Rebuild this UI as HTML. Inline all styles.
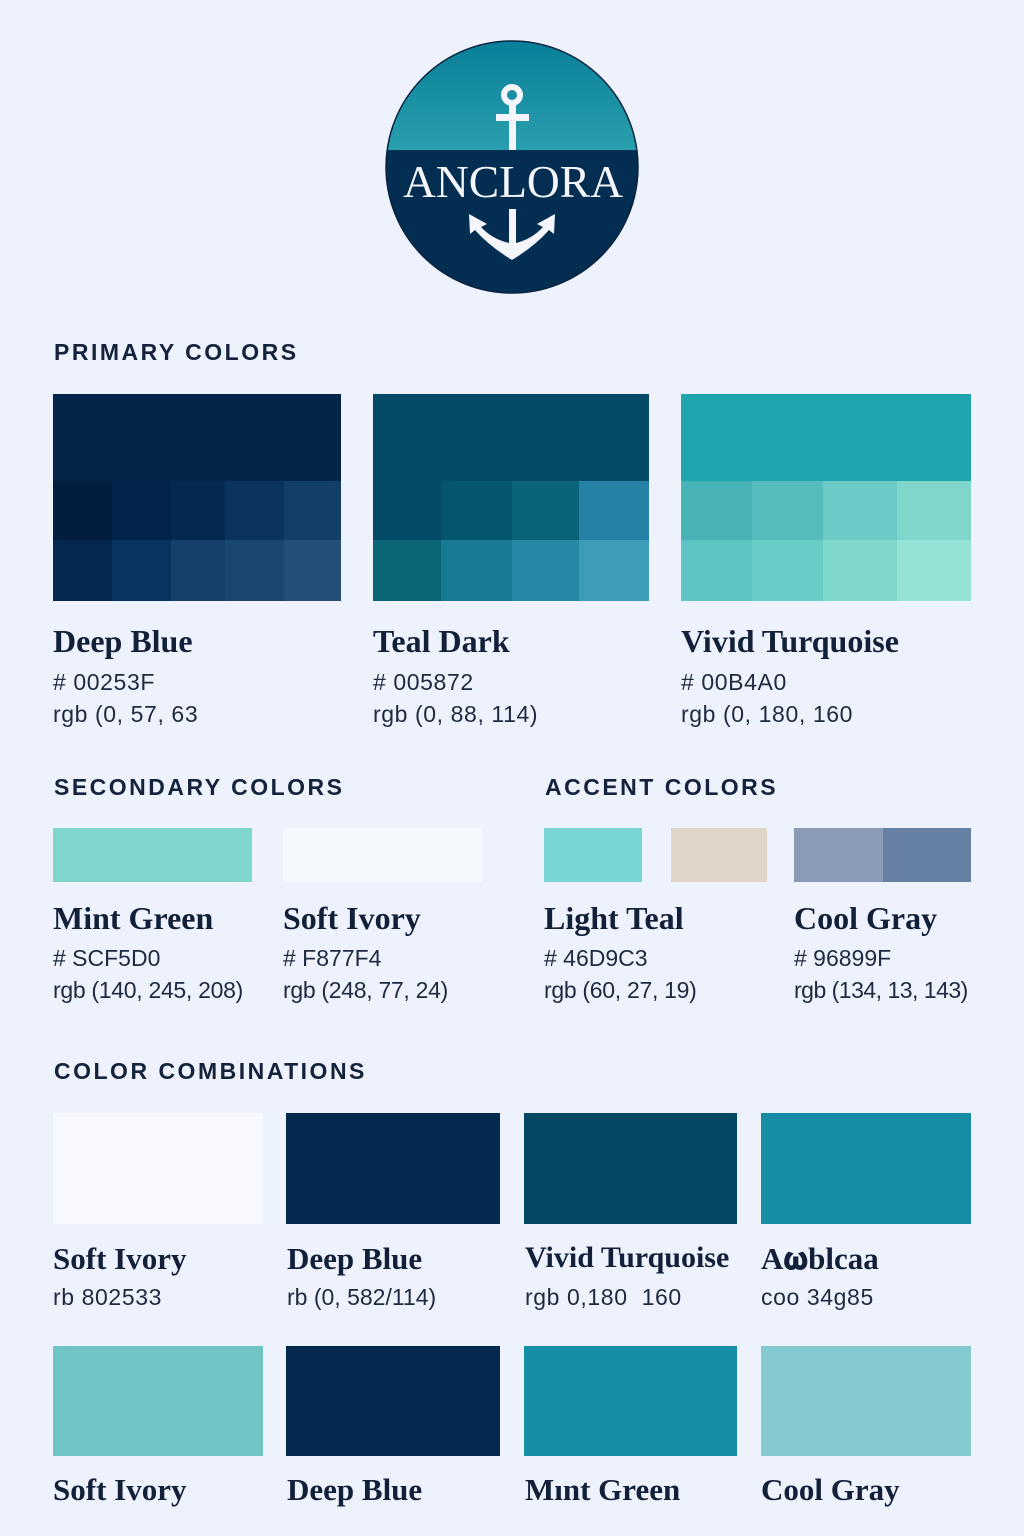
<!DOCTYPE html>
<html><head><meta charset="utf-8"><style>
body{margin:0;width:1024px;height:1536px;background:#eef2fc;position:relative;overflow:hidden;font-family:"Liberation Sans",sans-serif;color:#12203a}
.a{position:absolute}
.h{position:absolute;font-size:23px;font-weight:bold;letter-spacing:2.5px;color:#14223c;line-height:1}
.n{position:absolute;font-family:"Liberation Serif",serif;font-weight:bold;font-size:32px;line-height:1;color:#12203a;white-space:nowrap}
.t{position:absolute;font-size:23px;letter-spacing:0.6px;line-height:1;color:#1e2a40;white-space:nowrap}
.g{position:absolute;display:grid}
</style></head><body>

<svg class="a" style="left:380px;top:35px" width="264" height="264" viewBox="380 35 264 264">
<defs><linearGradient id="tg" x1="0" y1="0" x2="0" y2="1"><stop offset="0" stop-color="#077c97"/><stop offset="1" stop-color="#2aa0ae"/></linearGradient>
<clipPath id="c"><circle cx="512" cy="167" r="126"/></clipPath></defs>
<g clip-path="url(#c)">
<rect x="380" y="35" width="264" height="116" fill="url(#tg)"/>
<rect x="380" y="150" width="264" height="150" fill="#042d52"/>
</g>
<circle cx="512" cy="167" r="126" fill="none" stroke="#0a2440" stroke-width="1.5"/>
<circle cx="512" cy="95" r="8" fill="none" stroke="#f4f6fb" stroke-width="6"/>
<rect x="509" y="102" width="7" height="48" fill="#f4f6fb"/>
<rect x="496" y="114" width="33" height="7" fill="#f4f6fb"/>
<text x="513" y="197" text-anchor="middle" font-family="Liberation Serif,serif" font-size="46" textLength="220" lengthAdjust="spacingAndGlyphs" fill="#f4f6fb">ANCLORA</text>
<path d="M509 209 h7 v34 q16 -4 27 -16 l-6 -3 l18 -10 l-1 20 l-5 -4 q-14 16 -37 30 q-23 -14 -37 -30 l-5 4 l-1 -20 l18 10 l-6 3 q11 12 28 16z" fill="#f4f6fb"/>
</svg>

<div class="h" style="left:54px;top:341px">PRIMARY COLORS</div>

<div class="g" style="left:53px;top:394px;width:288px;height:207px;grid-template-columns:59px 59px 54px 59px 57px;grid-template-rows:87px 59px 61px">
<div style="grid-column:1/6;background:#03254a"></div>
<div style="background:#021d3d"></div><div style="background:#03234a"></div><div style="background:#042a52"></div><div style="background:#0a345c"></div><div style="background:#123f66"></div>
<div style="background:#04284f"></div><div style="background:#073460"></div><div style="background:#15406a"></div><div style="background:#1b466f"></div><div style="background:#244f77"></div>
</div>
<div class="g" style="left:373px;top:394px;width:276px;height:207px;grid-template-columns:68px 71px 67px 70px;grid-template-rows:87px 59px 61px">
<div style="grid-column:1/5;background:#034a66"></div>
<div style="background:#034a66"></div><div style="background:#03566e"></div><div style="background:#0b6378"></div><div style="background:#2681a6"></div>
<div style="background:#0b6577"></div><div style="background:#197a93"></div><div style="background:#268aa6"></div><div style="background:#3d9db9"></div>
</div>
<div class="g" style="left:681px;top:394px;width:290px;height:207px;grid-template-columns:71px 71px 74px 74px;grid-template-rows:87px 59px 61px">
<div style="grid-column:1/5;background:#1ea5b0"></div>
<div style="background:#48b3b6"></div><div style="background:#55bcbd"></div><div style="background:#6cc9c6"></div><div style="background:#80d6ca"></div>
<div style="background:#5dc3c3"></div><div style="background:#6accc6"></div><div style="background:#80d8cd"></div><div style="background:#95e2d6"></div>
</div>

<div class="n" style="left:53px;top:625px">Deep Blue</div>
<div class="t" style="left:53px;top:671px"># 00253F</div>
<div class="t" style="left:53px;top:703px">rgb (0, 57, 63</div>
<div class="n" style="left:373px;top:625px">Teal Dark</div>
<div class="t" style="left:373px;top:671px"># 005872</div>
<div class="t" style="left:373px;top:703px">rgb (0, 88, 114)</div>
<div class="n" style="left:681px;top:625px">Vivid Turquoise</div>
<div class="t" style="left:681px;top:671px"># 00B4A0</div>
<div class="t" style="left:681px;top:703px">rgb (0, 180, 160</div>

<div class="h" style="left:54px;top:776px">SECONDARY COLORS</div>
<div class="h" style="left:545px;top:776px">ACCENT COLORS</div>

<div class="a" style="left:53px;top:828px;width:199px;height:54px;background:#7fd6cc"></div>
<div class="a" style="left:283px;top:828px;width:199px;height:54px;background:#f5f8fd"></div>
<div class="a" style="left:544px;top:828px;width:98px;height:54px;background:#79d6d4"></div>
<div class="a" style="left:671px;top:828px;width:96px;height:54px;background:#dfd5c8"></div>
<div class="a" style="left:794px;top:828px;width:89px;height:54px;background:#8a9cb5"></div>
<div class="a" style="left:883px;top:828px;width:88px;height:54px;background:#6580a3"></div>

<div class="n" style="left:53px;top:902px">Mint Green</div>
<div class="t" style="left:53px;top:947px;letter-spacing:0"># SCF5D0</div>
<div class="t" style="left:53px;top:979px;letter-spacing:-0.3px">rgb (140, 245, 208)</div>
<div class="n" style="left:283px;top:902px">Soft Ivory</div>
<div class="t" style="left:283px;top:947px;letter-spacing:0"># F877F4</div>
<div class="t" style="left:283px;top:979px;letter-spacing:-0.3px">rgb (248, 77, 24)</div>
<div class="n" style="left:544px;top:902px">Light Teal</div>
<div class="t" style="left:544px;top:947px;letter-spacing:0"># 46D9C3</div>
<div class="t" style="left:544px;top:979px;letter-spacing:-0.3px">rgb (60, 27, 19)</div>
<div class="n" style="left:794px;top:902px">Cool Gray</div>
<div class="t" style="left:794px;top:947px;letter-spacing:0"># 96899F</div>
<div class="t" style="left:794px;top:979px;letter-spacing:-0.5px">rgb (134, 13, 143)</div>

<div class="h" style="left:54px;top:1060px">COLOR COMBINATIONS</div>

<div class="a" style="left:53px;top:1113px;width:210px;height:111px;background:#f7f9fe"></div>
<div class="a" style="left:286px;top:1113px;width:214px;height:111px;background:#022a4e"></div>
<div class="a" style="left:524px;top:1113px;width:213px;height:111px;background:#034863"></div>
<div class="a" style="left:761px;top:1113px;width:210px;height:111px;background:#168ca5"></div>

<div class="n" style="left:53px;top:1243px;font-size:31px">Soft Ivory</div>
<div class="t" style="left:53px;top:1286px">rb 802533</div>
<div class="n" style="left:287px;top:1243px;font-size:31px">Deep Blue</div>
<div class="t" style="left:287px;top:1286px;letter-spacing:0">rb (0, 582/114)</div>
<div class="n" style="left:525px;top:1243px;font-size:30px">Vivid Turquoise</div>
<div class="t" style="left:525px;top:1286px">rgb 0,180&nbsp; 160</div>
<div class="n" style="left:761px;top:1243px;font-size:31px">A&#x1D6DA;blcaa</div>
<div class="t" style="left:761px;top:1286px">coo 34g85</div>

<div class="a" style="left:53px;top:1346px;width:210px;height:110px;background:#6ec5c4"></div>
<div class="a" style="left:286px;top:1346px;width:214px;height:110px;background:#032a4e"></div>
<div class="a" style="left:524px;top:1346px;width:213px;height:110px;background:#168ea5"></div>
<div class="a" style="left:761px;top:1346px;width:210px;height:110px;background:#86cad1"></div>

<div class="n" style="left:53px;top:1474px;font-size:31px">Soft Ivory</div>
<div class="n" style="left:287px;top:1474px;font-size:31px">Deep Blue</div>
<div class="n" style="left:525px;top:1474px;font-size:31px">Mınt Green</div>
<div class="n" style="left:761px;top:1474px;font-size:31px">Cool Gray</div>
</body></html>
